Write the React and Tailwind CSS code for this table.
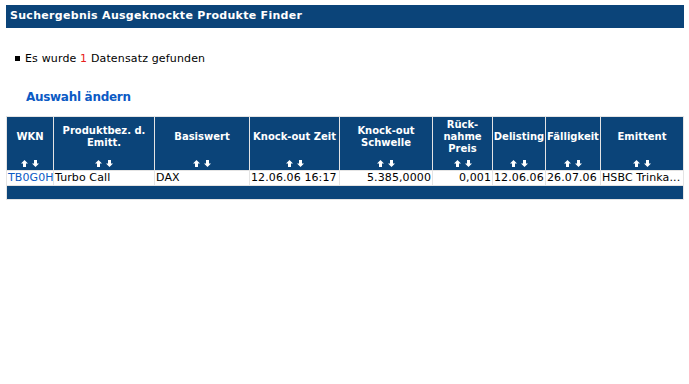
import React from 'react';

const columns = [
    { label: ['WKN'] },
    { label: ['Produktbez. d.', 'Emitt.'] },
    { label: ['Basiswert'] },
    { label: ['Knock-out Zeit'] },
    { label: ['Knock-out', 'Schwelle'] },
    { label: ['Rück-', 'nahme', 'Preis'] },
    { label: ['Delisting'] },
    { label: ['Fälligkeit'] },
    { label: ['Emittent'] },
];

const row = [
    { text: 'TB0G0H', link: true },
    { text: 'Turbo Call' },
    { text: 'DAX' },
    { text: '12.06.06 16:17' },
    { text: '5.385,0000', right: true },
    { text: '0,001', right: true },
    { text: '12.06.06' },
    { text: '26.07.06' },
    { text: 'HSBC Trinka...' },
];

const SortArrows = () => (
    <div className="flex items-center justify-center gap-[4px] h-[7px]">
        <svg width="7" height="7" viewBox="0 0 7 7">
            <path d="M3.5 0 L7 3.5 L5 3.5 L5 7 L2 7 L2 3.5 L0 3.5 Z" fill="#fff" />
        </svg>
        <svg width="7" height="7" viewBox="0 0 7 7">
            <path d="M3.5 7 L7 3.5 L5 3.5 L5 0 L2 0 L2 3.5 L0 3.5 Z" fill="#fff" />
        </svg>
    </div>
);

export default function App() {
    return (
        <div className="w-[689px] h-[384px] bg-white pt-[5px] px-[6px] text-black" style={{ fontFamily: '"DejaVu Sans", Verdana, sans-serif' }}>
            {/* Title bar */}
            <div className="h-[23px] w-[678px] bg-[#0b4479] flex items-center pl-[4px] text-white font-bold text-[11px] tracking-[0.3px]">
                Suchergebnis Ausgeknockte Produkte Finder
            </div>

            {/* Result count */}
            <div className="mt-[24px] flex items-center pl-[9px] text-[11px] leading-[13px] tracking-[0.15px]">
                <span className="inline-block w-[5px] h-[5px] bg-black mr-[5px]" />
                <span>
                    Es wurde <span className="text-[#e8201c]">1</span> Datensatz gefunden
                </span>
            </div>

            <div className="mt-[25px] pl-[20px] text-[12px] font-bold text-[#0b5ac4] leading-[14px] tracking-[-0.3px]">
                Auswahl ändern
            </div>

            {/* Result table */}
            <div className="mt-[12px] w-[678px] bg-[#e4e4e4] p-px grid grid-cols-[46px_100px_94px_89px_92px_59px_52px_54px_82px] gap-px">
                {columns.map((col, i) => (
                    <div key={i} className="h-[53px] bg-[#0b4479] flex flex-col text-white font-bold text-[10px] leading-[12px]">
                        <div className="h-[40px] flex flex-col items-center justify-center text-center">
                            {col.label.map((l, j) => (
                                <span key={j}>{l}</span>
                            ))}
                        </div>
                        <div className="pt-[3px]">
                            <SortArrows />
                        </div>
                    </div>
                ))}
                {row.map((cell, i) => (
                    <div
                        key={i}
                        className={`h-[14px] bg-white text-[11px] leading-[14px] tracking-[0.1px] whitespace-nowrap overflow-hidden px-px ${cell.right ? 'text-right' : ''} ${cell.link ? 'text-[#0b5ac4]' : ''}`}
                    >
                        {cell.text}
                    </div>
                ))}
                <div className="col-span-9 h-[13px] bg-[#0b4479]" />
            </div>
        </div>
    );
}
